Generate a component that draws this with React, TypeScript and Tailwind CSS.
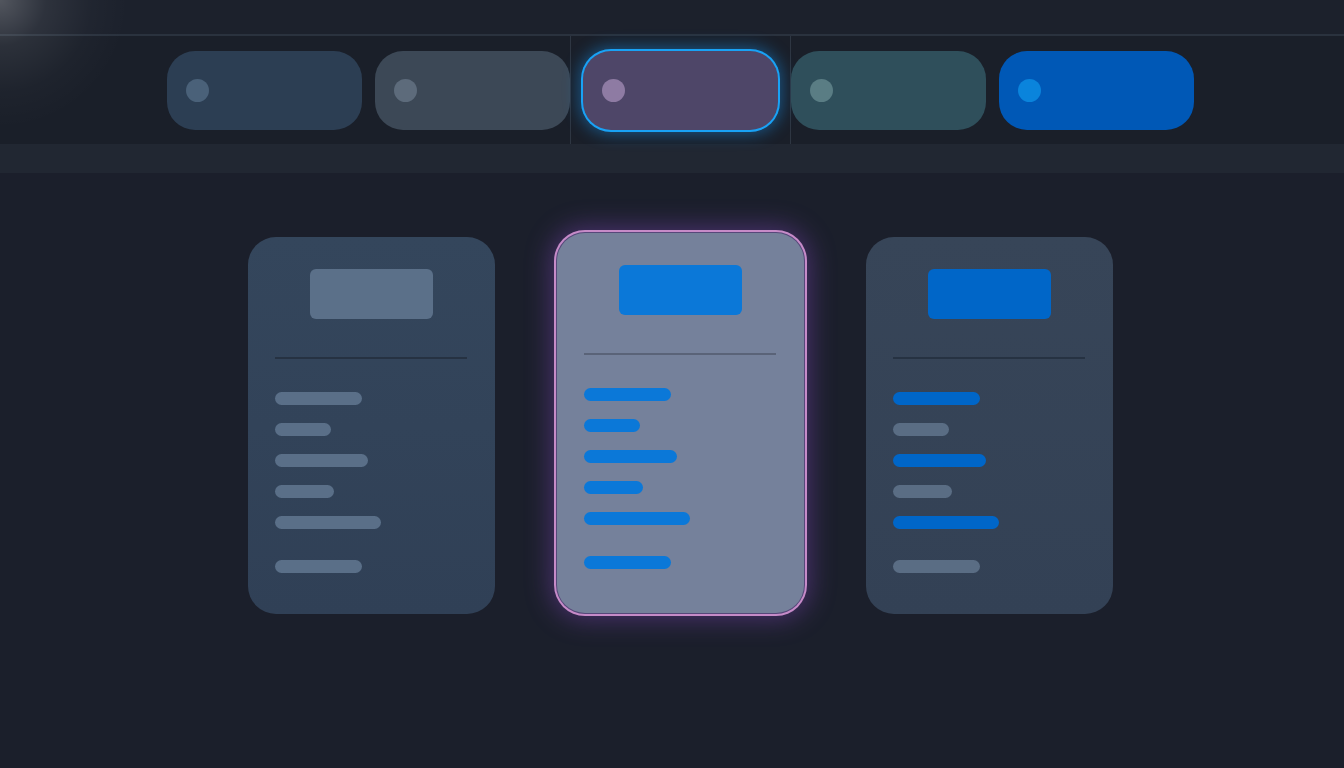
const pills = [
  { bg: 'bg-[#2c3e53]', dot: 'bg-[#4a6179]', active: false },
  { bg: 'bg-[#3c4856]', dot: 'bg-[#5d6b7b]', active: false },
  { bg: 'bg-[#4e4668]', dot: 'bg-[#8e7ba3]', active: true },
  { bg: 'bg-[#2f4f5b]', dot: 'bg-[#5a7d84]', active: false },
  { bg: 'bg-[#0058b6]', dot: 'bg-[#0a84dc]', active: false },
]

const widths = [87, 56, 93, 59, 106, 87]

type CardKind = 'plain' | 'selected' | 'mixed'

function Card({ kind }: { kind: CardKind }) {
  const shell =
    kind === 'selected'
      ? 'bg-[#75819b] -translate-y-[4px] h-[380px] shadow-[0_0_0_1px_#56487a,0_0_0_3px_#c68bc8,0_0_26px_6px_rgba(130,70,190,0.45)]'
      : kind === 'mixed'
        ? 'bg-gradient-to-b from-[#374558] to-[#334155] h-[377px]'
        : 'bg-gradient-to-b from-[#34465c] to-[#304056] h-[377px]'

  const head =
    kind === 'plain' ? 'bg-[#5b7089]' : kind === 'selected' ? 'bg-[#0b78d8]' : 'bg-[#0066c8]'
  const line = kind === 'selected' ? 'bg-[#5a6378]' : 'bg-[#263242]'

  const barColor = (i: number) => {
    if (kind === 'plain') return 'bg-[#5a6f88]'
    if (kind === 'selected') return 'bg-[#0b78d8]'
    return i % 2 === 0 ? 'bg-[#0066c8]' : 'bg-[#5a6d84]'
  }

  return (
    <div className={`w-[247px] rounded-[28px] flex flex-col items-center pt-8 ${shell}`}>
      <div className={`w-[123px] h-[50px] rounded-md ${head}`} />
      <div className={`w-[192px] h-[2px] mt-[38px] ${line}`} />
      <div className="w-[192px] flex flex-col gap-[18px] mt-[33px]">
        {widths.map((w, i) => (
          <div
            key={i}
            className={`h-[13px] rounded-full ${barColor(i)} ${i === 5 ? 'mt-[13px]' : ''}`}
            style={{ width: w }}
          />
        ))}
      </div>
    </div>
  )
}

export default function App() {
  return (
    <div className="relative w-full h-[768px] overflow-hidden bg-[#1b1f2b]" style={{ fontFamily: 'Inter, sans-serif' }}>
      {/* top bar */}
      <div className="h-[36px] bg-[#1c212c] border-b-2 border-[#2a323e]" />

      {/* pill row */}
      <div className="relative h-[108px] bg-[#1a1f29] pl-4 flex items-center justify-center">
        <div className="absolute top-0 bottom-0 left-[570px] w-px bg-[#2e3642]" />
        <div className="absolute top-0 bottom-0 left-[790px] w-px bg-[#2e3642]" />
        <div className="relative flex gap-[13px]">
          {pills.map((p, i) => (
            <div
              key={i}
              className={`w-[195px] h-[79px] rounded-[28px] flex items-center pl-[19px] ${p.bg} ${
                p.active
                  ? 'shadow-[0_0_0_2px_#19a2f5,0_0_16px_4px_rgba(25,150,245,0.45)]'
                  : ''
              }`}
            >
              <div className={`w-[23px] h-[23px] rounded-full ${p.dot}`} />
            </div>
          ))}
        </div>
      </div>

      {/* sub bar */}
      <div className="h-[29px] bg-[#212732]" />

      {/* cards */}
      <div className="pl-4 pt-[64px] flex justify-center items-start gap-[62px]">
        <Card kind="plain" />
        <Card kind="selected" />
        <Card kind="mixed" />
      </div>

      {/* corner light */}
      <div className="pointer-events-none absolute -left-[130px] -top-[130px] w-[260px] h-[260px] rounded-full bg-[radial-gradient(circle,rgba(255,255,255,0.24)_0%,rgba(255,255,255,0.08)_25%,rgba(255,255,255,0.02)_50%,rgba(255,255,255,0)_70%)]" />
    </div>
  )
}
